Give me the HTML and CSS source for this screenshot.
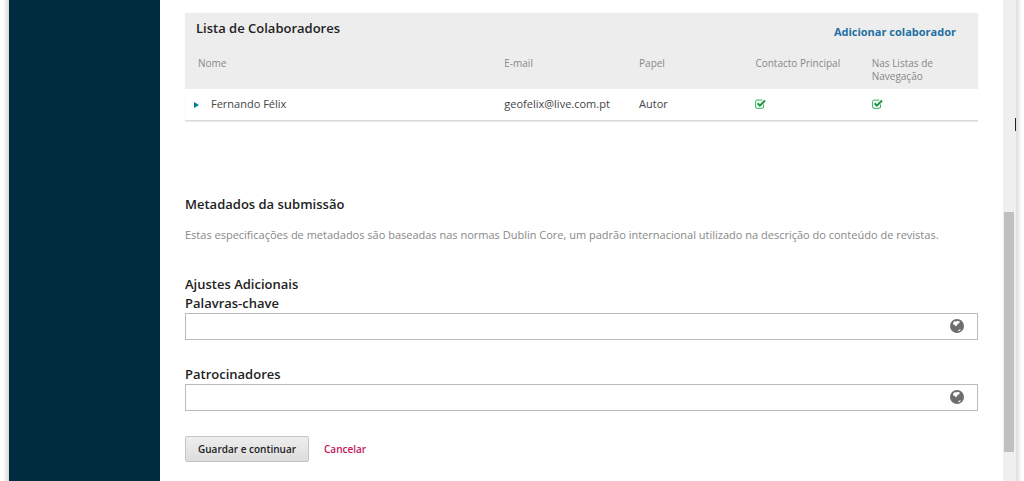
FILE: index.html
```html
<!DOCTYPE html>
<html lang="pt">
<head>
<meta charset="utf-8">
<title>Metadados da submissão</title>
<link rel="stylesheet" href="styles.css">
</head>
<body>
<svg class="sprite" aria-hidden="true">
  <symbol id="check" viewBox="0 0 11 10">
    <path d="M8.5 5.500v2.500a1.300 1.300 0 0 1-1.300 1.300H1.900A1.300 1.300 0 0 1 .6 8V2.400A1.300 1.300 0 0 1 1.900 1.100h5.400" fill="none" stroke="#2bb55a" stroke-width="1"/>
    <path d="M2.600 4.300l2.300 2.300L10 1.500" fill="none" stroke="#16973f" stroke-width="2"/>
  </symbol>
  <symbol id="globe" viewBox="0 0 14 14">
    <circle cx="7" cy="7" r="7" fill="#6e6e6e"/>
    <path d="M3 3.800L4.600 2.200 6.300 2.600 7 1.700 9.800 2.600 9.300 4.200 7.800 4.800 6.900 6.500 5.300 7.300 4.900 6 3.300 5.500zM8.200 11.200L10.600 9.900 10.300 11.600 8.700 12.300z" fill="#fff"/>
  </symbol>
</svg>
<div class="window">
  <aside class="sidebar"></aside>
  <main class="content">
    <section class="grid">
      <header class="grid-header">
        <h2>Lista de Colaboradores</h2>
        <a class="add" href="#">Adicionar colaborador</a>
      </header>
      <table>
        <thead>
          <tr>
            <th class="name" scope="col">Nome</th>
            <th class="email" scope="col">E-mail</th>
            <th scope="col">Papel</th>
            <th scope="col">Contacto Principal</th>
            <th scope="col">Nas Listas de Navegação</th>
          </tr>
        </thead>
        <tbody>
          <tr>
            <td class="person"><button class="expand" type="button" aria-label="Mostrar opções"></button>Fernando Félix</td>
            <td>geofelix@live.com.pt</td>
            <td>Autor</td>
            <td><svg class="check" role="img" aria-label="Sim"><use href="#check"/></svg></td>
            <td><svg class="check" role="img" aria-label="Sim"><use href="#check"/></svg></td>
          </tr>
        </tbody>
      </table>
    </section>
    <form>
      <h2>Metadados da submissão</h2>
      <p class="description">Estas especificações de metadados são baseadas nas normas Dublin Core, um padrão internacional utilizado na descrição do conteúdo de revistas.</p>
      <h2>Ajustes Adicionais</h2>
      <div class="field">
        <label for="keywords">Palavras-chave</label>
        <div class="control">
          <input id="keywords" type="text">
          <svg class="globe" aria-hidden="true"><use href="#globe"/></svg>
        </div>
      </div>
      <div class="field">
        <label for="sponsors">Patrocinadores</label>
        <div class="control">
          <input id="sponsors" type="text">
          <svg class="globe" aria-hidden="true"><use href="#globe"/></svg>
        </div>
      </div>
      <div class="actions">
        <button class="save" type="submit">Guardar e continuar</button>
        <a class="cancel" href="#">Cancelar</a>
      </div>
    </form>
  </main>
  <div class="scrollbar"><div class="thumb"></div><div class="cursor"></div></div>
</div>
</body>
</html>
```
FILE: styles.css
```css
* {
  box-sizing: border-box;
}

body {
  margin: 0;
  background: #fff;
  color: #222;
  font: 11px/18px "Open Sans", "Noto Sans", sans-serif;
}

.sprite {
  display: none;
}

a {
  text-decoration: none;
}

h2,
label {
  display: block;
  margin: 0;
  font-size: 13px;
  line-height: 19px;
  font-weight: 600;
}

.window {
  display: flex;
  min-height: 100vh;
  padding: 0 8px 0 9px;
  background: linear-gradient(to right, #fff 3px, #d8d6d9 9px, transparent 9px),
    linear-gradient(to left, #fff 2px, #dcdcdc 8px, #fff 8px);
}

.sidebar {
  flex: 0 0 151px;
  background: #002c40;
}

.content {
  flex: 1;
  padding: 13px 25px 19px;
  background: #fff;
}

.grid {
  border-bottom: 1px solid #d8d8d8;
  box-shadow: 0 1px 1px #eee;
}

.grid-header {
  display: flex;
  justify-content: space-between;
  padding: 6px 22px 0 11px;
  background: #ededed;
}

.add {
  padding-top: 4px;
  color: #1e6fa3;
  font-weight: 700;
}

table {
  width: 100%;
  table-layout: fixed;
  border-collapse: collapse;
}

thead {
  background: #ededed;
}

th {
  padding: 16px 10px 6px;
  color: #888;
  font-size: 10px;
  line-height: 13px;
  font-weight: 400;
  text-align: left;
  vertical-align: top;
}

th.name {
  width: 39%;
  padding-left: 13px;
}

th.email {
  width: 17%;
}

td {
  padding: 6px 10px 7px;
  color: #444;
}

.person {
  padding-left: 9px;
}

.expand {
  width: 5px;
  height: 6px;
  margin: 0 12px 1px 0;
  padding: 0;
  border: 0;
  background: #007f8f;
  clip-path: polygon(0 0, 100% 50%, 0 100%);
}

.check {
  display: block;
  width: 11px;
  height: 10px;
}

form {
  padding-top: 74px;
}

.description {
  margin: 12px 0 31px;
  color: #888;
}

.field {
  margin-bottom: 25px;
}

.control {
  position: relative;
}

input {
  display: block;
  width: 100%;
  height: 27px;
  padding: 0 40px 0 8px;
  border: 1px solid #bbb;
  background: #fff;
  font: inherit;
}

.globe {
  position: absolute;
  top: 6px;
  right: 14px;
  width: 14px;
  height: 14px;
}

.actions {
  display: flex;
  align-items: center;
  gap: 15px;
}

.save {
  padding: 3px 12px;
  border: 1px solid #c4c4c4;
  border-radius: 2px;
  background: linear-gradient(#eee, #dcdcdc);
  color: #222;
  font: 600 10px/18px "Open Sans", "Noto Sans", sans-serif;
}

.cancel {
  color: #c2185b;
  font-size: 10px;
  font-weight: 600;
}

.scrollbar {
  position: relative;
  flex: 0 0 13px;
  background: #efefef;
}

.thumb {
  position: absolute;
  top: 44%;
  left: 1px;
  width: 10px;
  height: 50%;
  background: #c0c0c0;
}

.cursor {
  position: absolute;
  top: 118px;
  right: 0;
  width: 1px;
  height: 13px;
  background: #222;
}
```
